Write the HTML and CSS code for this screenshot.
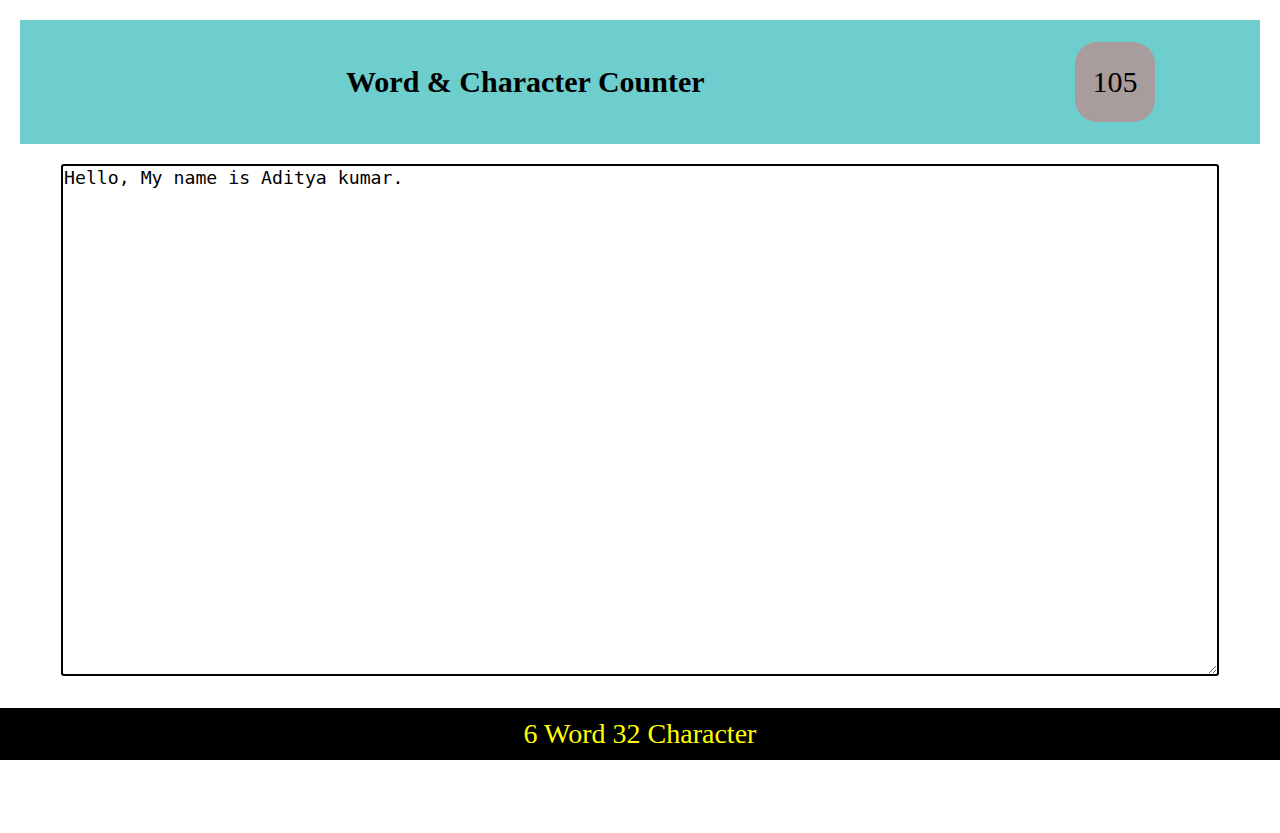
FILE: index.html
```html
<!DOCTYPE html>
<html lang="en">
<head>
<meta charset="utf-8">
<title>Word &amp; Character Counter</title>
<link rel="stylesheet" href="styles.css">
</head>
<body>
<header class="header">
  <h1 class="title">Word &amp; Character Counter</h1>
  <div class="badge">105</div>
</header>
<main class="main">
  <textarea class="editor" spellcheck="true">Hello, My name is Aditya kumar.</textarea>
</main>
<footer class="footer">6 Word 32 Character</footer>
</body>
</html>
```
FILE: styles.css
```css
html, body {
  margin: 0;
  padding: 0;
  background: #ffffff;
  font-family: "Liberation Serif", "Times New Roman", serif;
}

.header {
  margin: 20px 20px 0;
  height: 124px;
  background: #6ecece;
  display: flex;
  align-items: center;
  padding: 0 105px 0 326px;
  box-sizing: border-box;
}

.title {
  margin: 0;
  font-size: 30px;
  font-weight: bold;
  color: #000;
}

.badge {
  margin-left: auto;
  width: 80px;
  height: 80px;
  border-radius: 22px;
  background: #a89c9c;
  display: flex;
  align-items: center;
  justify-content: center;
  font-size: 30px;
  color: #000;
}

.main {
  padding: 20px 0 32px;
}

.editor {
  display: block;
  margin: 0 auto;
  width: 1158px;
  height: 512px;
  box-sizing: border-box;
  border: 2px solid #000;
  border-radius: 3px;
  padding: 1px 1px;
  font-family: "DejaVu Sans Mono", "Liberation Mono", monospace;
  font-size: 18.2px;
  color: #000;
  outline: none;
}

.footer {
  height: 52px;
  background: #000;
  color: #ffff00;
  display: flex;
  align-items: center;
  justify-content: center;
  font-size: 28px;
}
```
